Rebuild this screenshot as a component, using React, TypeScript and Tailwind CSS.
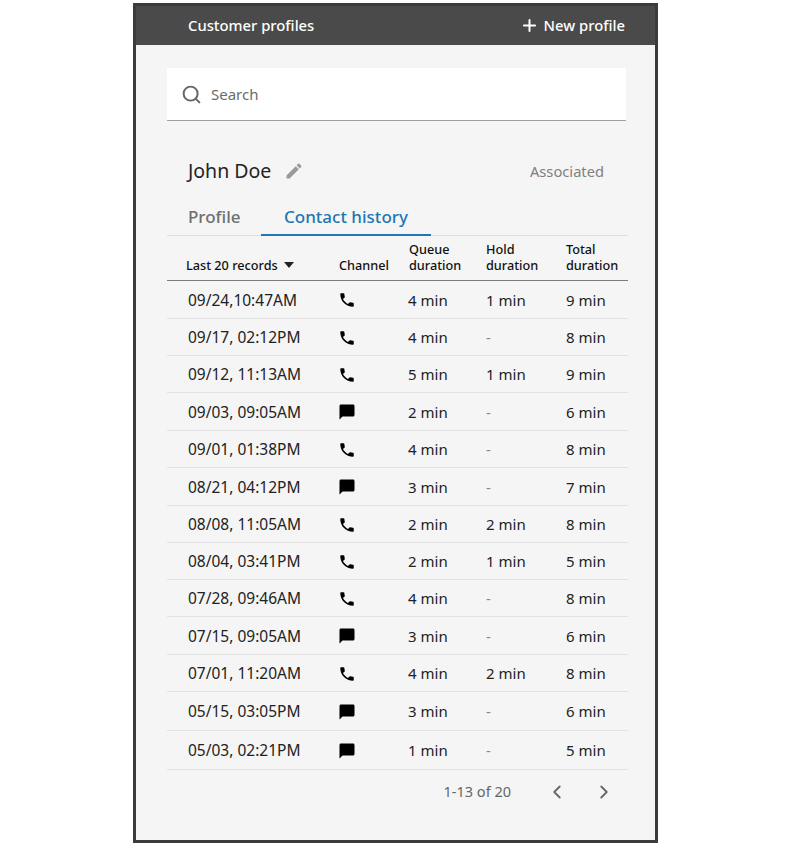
import { ChevronLeft, ChevronRight, Plus, Search } from 'lucide-react'

type Record = { date: string; channel: 'phone' | 'chat'; queue: string; hold: string; total: string; height: string }

const records: Record[] = [
  { date: '09/24,10:47AM', channel: 'phone', queue: '4 min', hold: '1 min', total: '9 min', height: 'h-[38px]' },
  { date: '09/17, 02:12PM', channel: 'phone', queue: '4 min', hold: '-', total: '8 min', height: 'h-[37px]' },
  { date: '09/12, 11:13AM', channel: 'phone', queue: '5 min', hold: '1 min', total: '9 min', height: 'h-[37px]' },
  { date: '09/03, 09:05AM', channel: 'chat', queue: '2 min', hold: '-', total: '6 min', height: 'h-[38px]' },
  { date: '09/01, 01:38PM', channel: 'phone', queue: '4 min', hold: '-', total: '8 min', height: 'h-[37px]' },
  { date: '08/21, 04:12PM', channel: 'chat', queue: '3 min', hold: '-', total: '7 min', height: 'h-[38px]' },
  { date: '08/08, 11:05AM', channel: 'phone', queue: '2 min', hold: '2 min', total: '8 min', height: 'h-[37px]' },
  { date: '08/04, 03:41PM', channel: 'phone', queue: '2 min', hold: '1 min', total: '5 min', height: 'h-[37px]' },
  { date: '07/28, 09:46AM', channel: 'phone', queue: '4 min', hold: '-', total: '8 min', height: 'h-[37px]' },
  { date: '07/15, 09:05AM', channel: 'chat', queue: '3 min', hold: '-', total: '6 min', height: 'h-[38px]' },
  { date: '07/01, 11:20AM', channel: 'phone', queue: '4 min', hold: '2 min', total: '8 min', height: 'h-[37px]' },
  { date: '05/15, 03:05PM', channel: 'chat', queue: '3 min', hold: '-', total: '6 min', height: 'h-[39px]' },
  { date: '05/03, 02:21PM', channel: 'chat', queue: '1 min', hold: '-', total: '5 min', height: 'h-[39px]' },
]

function PhoneIcon() {
  return (
    <svg width="18" height="18" viewBox="0 0 24 24" fill="#000">
      <path d="M6.62 10.79c1.44 2.83 3.76 5.14 6.59 6.59l2.2-2.2c.27-.27.67-.36 1.02-.24 1.12.37 2.33.57 3.57.57.55 0 1 .45 1 1V20c0 .55-.45 1-1 1-9.39 0-17-7.61-17-17 0-.55.45-1 1-1h3.5c.55 0 1 .45 1 1 0 1.25.2 2.45.57 3.57.11.35.03.74-.25 1.02l-2.2 2.2z" />
    </svg>
  )
}

function ChatIcon() {
  return (
    <svg width="18" height="18" viewBox="0 0 24 24" fill="#000">
      <path d="M20 2H4c-1.1 0-1.99.9-1.99 2L2 22l4-4h14c1.1 0 2-.9 2-2V4c0-1.1-.9-2-2-2z" />
    </svg>
  )
}

function PencilIcon() {
  return (
    <svg width="20" height="20" viewBox="0 0 24 24" fill="#9a9a9a">
      <path d="M3 17.25V21h3.75L17.81 9.94l-3.75-3.75L3 17.25zM20.71 7.04c.39-.39.39-1.02 0-1.41l-2.34-2.34c-.39-.39-1.02-.39-1.41 0l-1.83 1.83 3.75 3.75 1.83-1.83z" />
    </svg>
  )
}

export default function App() {
  return (
    <div className="w-[791px] h-[847px] bg-white pt-[3px] pl-[133px] font-['Noto_Sans',sans-serif]">
      <div className="w-[525px] h-[840px] border-[3px] border-[#3b3b3b] bg-[#f5f5f5] flex flex-col">
        <div className="h-[39px] shrink-0 bg-[#4a4a4a] flex items-center justify-between pl-[52px] pr-[30px] text-white text-[14.8px] font-medium">
          <span>Customer profiles</span>
          <span className="flex items-center gap-[5px] -mt-[1px]">
            <Plus size={19} strokeWidth={2.5} />
            New profile
          </span>
        </div>

        <div className="pl-[31px] pr-[27px] pt-[23px] flex flex-col flex-1">
          <div className="mr-[2px] h-[53px] shrink-0 bg-white border-b border-[#a0a0a0] flex items-center pl-[14px] gap-[9px] text-[#6b6b6b] text-[15px]">
            <Search size={21} strokeWidth={2.25} className="text-[#666]" />
            <span>Search</span>
          </div>

          <div className="mt-[34px] h-[31px] flex items-center justify-between pl-[21px] pr-[24px]">
            <div className="flex items-center gap-[13px] text-[19.5px] text-[#222]">
              John Doe
              <PencilIcon />
            </div>
            <span className="text-[14.7px] text-[#808080] mt-[1px]">Associated</span>
          </div>

          <div className="mt-[14px] h-[36px] border-b border-[#dddddd] flex items-end">
            <span className="ml-[21px] w-[73px] pb-[6px] text-[17px] font-medium text-[#6f6f6f]">Profile</span>
            <span className="px-[23px] pb-[5px] text-[17px] font-medium text-[#1e77b4] border-b-2 border-[#1f77b4] -mb-px">
              Contact history
            </span>
          </div>

          <div className="h-[45px] shrink-0 border-b border-[#7d7d7d] grid grid-cols-[171px_70px_78px_80px_1fr] items-end text-[12.7px] leading-[16px] font-medium text-[#111] pb-[7px]">
            <span className="pl-[19px] flex items-center gap-[6px]">
              Last 20 records
              <span className="w-0 h-0 border-x-[5px] border-x-transparent border-t-[6px] border-t-[#222]" />
            </span>
            <span className="pl-px">Channel</span>
            <span className="pl-px">
              Queue
              <br />
              duration
            </span>
            <span>
              Hold
              <br />
              duration
            </span>
            <span>
              Total
              <br />
              duration
            </span>
          </div>

          {records.map((r) => (
            <div
              key={r.date}
              className={`${r.height} shrink-0 border-b border-[#e2e2e2] grid grid-cols-[171px_70px_78px_80px_1fr] items-center pt-px text-[15px] text-[#222]`}
            >
              <span className="pl-[21px] text-[15.5px] mt-px">{r.date}</span>
              <span className="flex">{r.channel === 'phone' ? <PhoneIcon /> : <ChatIcon />}</span>
              <span>{r.queue}</span>
              <span className={r.hold === '-' ? 'text-[#888]' : ''}>{r.hold}</span>
              <span>{r.total}</span>
            </div>
          ))}

          <div className="mt-[11px] flex items-center justify-end pr-[13px] text-[14.5px] text-[#666]">
            <span>1-13 of 20</span>
            <ChevronLeft size={22} strokeWidth={2} className="ml-[35px]" />
            <ChevronRight size={22} strokeWidth={2} className="ml-[25px]" />
          </div>
        </div>
      </div>
    </div>
  )
}
